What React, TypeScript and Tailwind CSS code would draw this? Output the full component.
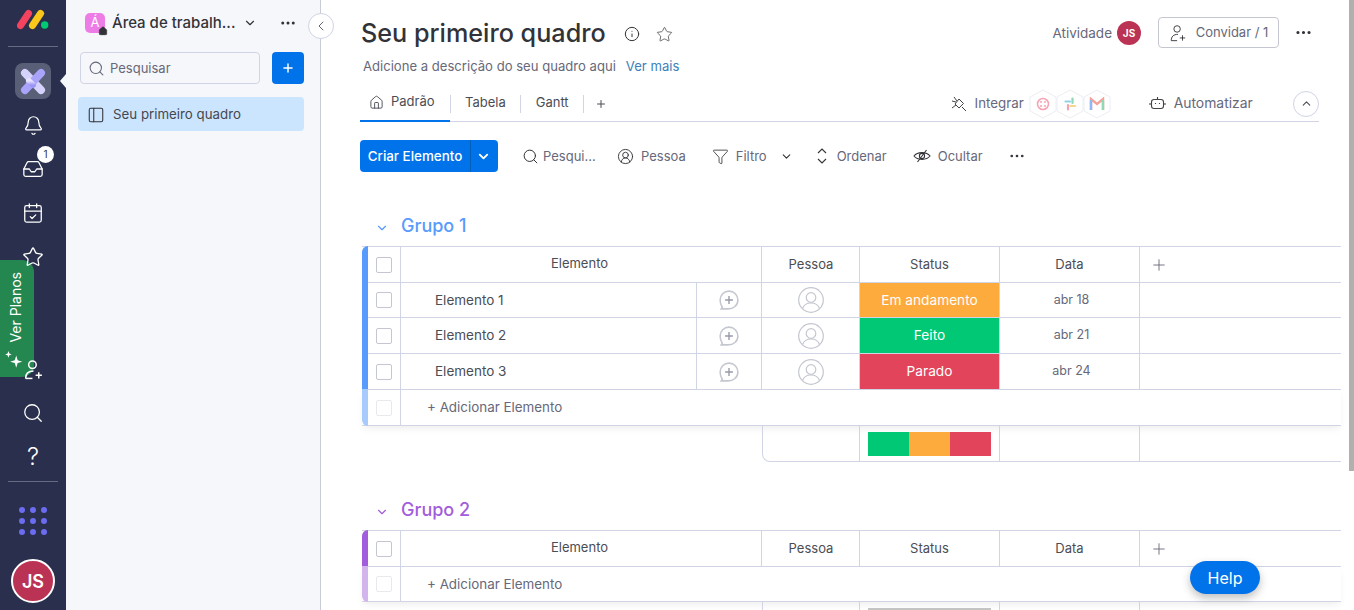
import {
  Bell,
  ChevronDown,
  ChevronLeft,
  ChevronUp,
  CircleUserRound,
  Filter,
  Home,
  Inbox,
  Info,
  MoreHorizontal,
  PanelLeft,
  Plus,
  Search,
  Star,
  CalendarCheck,
} from "lucide-react";

const Divider = () => <span className="mx-[14.5px] h-[18px] w-px bg-[#d0d4e4]" />;

const MondayLogo = () => (
  <svg width="32" height="21" viewBox="0 0 32 21">
    <line x1="3.5" y1="16.5" x2="11.5" y2="4.5" stroke="#f5435f" strokeWidth="7" strokeLinecap="round" />
    <line x1="15.5" y1="16.5" x2="23.5" y2="4.5" stroke="#fbc71a" strokeWidth="7" strokeLinecap="round" />
    <circle cx="27.7" cy="16" r="3.7" fill="#00ca72" />
  </svg>
);

const WorkspaceIcon = () => (
  <svg width="30" height="30" viewBox="0 0 30 30">
    <defs>
      <linearGradient id="wsGrad" x1="0" y1="0" x2="0" y2="1">
        <stop offset="0" stopColor="#e6e3ff" />
        <stop offset="1" stopColor="#9a95f7" />
      </linearGradient>
    </defs>
    <path d="M7 7 L23 24" stroke="#d5d2fc" strokeWidth="8" strokeLinecap="round" />
    <path d="M23 7 L7 24" stroke="#a9a4fa" strokeWidth="8" strokeLinecap="round" />
    <path d="M11 15 L15 19" stroke="url(#wsGrad)" strokeWidth="6" strokeLinecap="round" />
  </svg>
);

const Sparkles = () => (
  <svg width="20" height="20" viewBox="0 0 18 18" fill="white">
    <path d="M11 5 L12.3 9.2 L16.5 10.5 L12.3 11.8 L11 16 L9.7 11.8 L5.5 10.5 L9.7 9.2 Z" />
    <path d="M4 1 L4.8 3.2 L7 4 L4.8 4.8 L4 7 L3.2 4.8 L1 4 L3.2 3.2 Z" />
  </svg>
);

const InviteIcon = ({ size, width }: { size: number; width: number }) => (
  <svg width={size} height={size} viewBox="0 0 20 20" fill="none" stroke="currentColor" strokeWidth={width}>
    <circle cx="9" cy="5.5" r="3.6" />
    <path d="M2.5 18.5 C2.5 14 5 11.5 10 11.5" />
    <path d="M2.5 18.5 H9" />
    <path d="M15 12.5 V18.5 M12 15.5 H18" />
  </svg>
);

const HiddenEye = () => (
  <svg width="18" height="16" viewBox="0 0 18 16" fill="none" stroke="#323338" strokeWidth="1.1">
    <path d="M1 8 C4.5 3.5 13.5 3.5 17 8 C13.5 12.5 4.5 12.5 1 8 Z" />
    <circle cx="9" cy="8" r="2.6" />
    <path d="M13.5 2 L4.5 14" />
  </svg>
);

const PlugIcon = () => (
  <svg width="16" height="16" viewBox="0 0 16 16" fill="none" stroke="#444" strokeWidth="1">
    <path d="M4 8 L8 3 L12.5 7.5 L8 12 Z" />
    <path d="M1 5 L5 6 M3 1 L6 5 M11 11 L15 15 M1 12 L5 9" />
  </svg>
);

const BotIcon = () => (
  <svg width="17" height="16" viewBox="0 0 17 16" fill="none" stroke="#444" strokeWidth="1.1">
    <rect x="2.5" y="3.5" width="12" height="9" rx="2.5" />
    <path d="M8.5 1 V3.5 M1 7 V9 M16 7 V9 M6.5 7 V8 M10.5 7 V8" />
  </svg>
);

const CommentPlus = () => (
  <svg width="20" height="20" viewBox="1 1 18 18" fill="none" stroke="#c5c7d0" strokeWidth="1.4">
    <path d="M4 16.5 L3 18 L9 18 C14 18 18 15 18 10 C18 5.5 14.5 2 10 2 C5.5 2 2 5.5 2 10 C2 12.5 3 15 4 16.5 Z" />
    <path d="M10 6.5 V13.5 M6.5 10 H13.5" stroke="#9699a6" strokeWidth="1.2" />
  </svg>
);

const PersonCircle = () => (
  <svg width="26" height="26" viewBox="0 0 26 26" fill="none" stroke="#c5c7d0" strokeWidth="1.2">
    <circle cx="13" cy="13" r="12.3" />
    <circle cx="13" cy="10.5" r="4.8" />
    <path d="M4.5 21.5 C6 17.5 9 16 13 16 C17 16 20 17.5 21.5 21.5" />
  </svg>
);

const Hex = ({ children }: { children: React.ReactNode }) => (
  <svg width="28" height="30" viewBox="0 0 28 30" className="-mr-[1px]">
    <path d="M14 1 L27 8 V22 L14 29 L1 22 V8 Z" fill="white" stroke="#eceef5" strokeWidth="1" />
    {children}
  </svg>
);

const Check = ({ faded }: { faded?: boolean }) => (
  <span className={`h-4 w-4 rounded-[2px] border ${faded ? "border-[#e8e9ef]" : "border-[#c5c7d0]"}`} />
);

const cols = "flex w-[979px] border-b border-[#d0d4e4]";

const AccentCheck = ({ color, faded }: { color: string; faded?: boolean }) => (
  <div className="flex w-[39px] shrink-0 border-r border-[#d0d4e4]">
    <span className={`-my-px w-[6px] ${color}`} />
    <div className="flex flex-1 items-center justify-center pr-[1px]">
      <Check faded={faded} />
    </div>
  </div>
);

const HeaderRow = ({ color }: { color: string }) => (
  <div className={`${cols} h-[37px] border-t`}>
    <AccentCheck color={`${color} rounded-tl-md`} />
    <div className="flex w-[361px] items-center justify-center border-r border-[#d0d4e4] pb-[2px] pr-[3px]">Elemento</div>
    <div className="flex w-[98px] items-center justify-center border-r border-[#d0d4e4] pl-[1px]">Pessoa</div>
    <div className="flex w-[140px] items-center justify-center border-r border-[#d0d4e4]">Status</div>
    <div className="flex w-[140px] items-center justify-center border-r border-[#d0d4e4]">Data</div>
    <div className="flex flex-1 items-center pl-[10px]">
      <Plus size={18} strokeWidth={1.2} className="text-[#676879]" />
    </div>
  </div>
);

const ItemRow = ({ name, status, statusBg, date, height }: { name: string; status: string; statusBg: string; date: string; height: string }) => (
  <div className={`${cols} ${height}`}>
    <AccentCheck color="bg-[#579bfc]" />
    <div className="flex w-[296px] items-center border-r border-[#d0d4e4] pl-[34px] text-[13.5px]">{name}</div>
    <div className="flex w-[65px] items-center justify-center border-r border-[#d0d4e4]">
      <CommentPlus />
    </div>
    <div className="flex w-[98px] items-center justify-center border-r border-[#d0d4e4]">
      <PersonCircle />
    </div>
    <div className={`flex w-[140px] items-center justify-center border-r border-[#d0d4e4] text-[13.7px] text-white ${statusBg}`}>{status}</div>
    <div className="flex w-[140px] items-center justify-center border-r border-[#d0d4e4] pl-[4px] text-[12.5px] text-[#676879]">{date}</div>
    <div className="flex-1" />
  </div>
);

const AddRow = ({ color, height }: { color: string; height: string }) => (
  <div className={`${cols} ${height} shadow-[0_4px_8px_-2px_rgba(0,0,0,0.08)]`}>
    <AccentCheck color={`${color} rounded-bl-md`} faded />
    <div className="flex flex-1 items-center pl-[26px] text-[13.4px] text-[#676879]">+ Adicionar Elemento</div>
  </div>
);

const FooterRow = ({ children }: { children?: React.ReactNode }) => (
  <div className="flex h-9 w-[979px] pl-[399px]">
    <div className="ml-[1px] w-[98px] rounded-bl-lg border-b border-l border-r border-[#d0d4e4]" />
    <div className="flex w-[140px] items-center justify-center border-b border-r border-[#d0d4e4]">{children}</div>
    <div className="w-[140px] border-b border-r border-[#d0d4e4]" />
    <div className="flex-1 border-b border-[#d0d4e4]" />
  </div>
);

export default function App() {
  return (
    <div className="relative flex h-screen w-full overflow-hidden bg-white font-['Inter',sans-serif] text-[13px] text-[#4b4d55]">
      {/* barra lateral escura */}
      <aside className="relative flex w-[66px] shrink-0 flex-col items-center bg-[#292f4c] text-white">
        <div className="flex h-[46px] items-center justify-center pb-[7px]">
          <MondayLogo />
        </div>
        <div className="h-px w-[50px] bg-[#676b82]" />
        <div className="mt-4 flex h-9 w-9 items-center justify-center rounded-lg bg-[#5a5f78]">
          <WorkspaceIcon />
        </div>
        <div className="relative z-10 mt-1 flex h-11 items-center justify-center">
          <Bell size={21} strokeWidth={1.4} />
        </div>
        <div className="relative z-10 flex h-11 items-center justify-center">
          <Inbox size={22} strokeWidth={1.4} />
          <span className="absolute -right-[10px] top-[-1px] flex h-[17px] w-[17px] items-center justify-center rounded-full bg-white text-[10px] text-[#323338]">1</span>
        </div>
        <div className="relative z-10 flex h-11 items-center justify-center">
          <CalendarCheck size={22} strokeWidth={1.4} />
        </div>
        <div className="relative z-10 flex h-11 items-center justify-center">
          <Star size={22} strokeWidth={1.4} />
        </div>

        <div className="relative z-10 mt-auto flex h-11 items-center justify-center">
          <InviteIcon size={21} width={1.4} />
        </div>
        <div className="flex h-11 items-center justify-center">
          <Search size={22} strokeWidth={1.4} />
        </div>
        <div className="flex h-11 items-center justify-center">
          <span className="text-[24px] font-light leading-none">?</span>
        </div>
        <div className="mt-[2px] h-px w-[50px] bg-[#676b82]" />
        <div className="mt-[25px] grid grid-cols-3 gap-[5px]">
          {Array.from({ length: 9 }).map((_, i) => (
            <span key={i} className="h-[6px] w-[6px] rounded-full bg-[#6c6cf0]" />
          ))}
        </div>
        <div className="mb-[7px] mt-[24px] flex h-11 w-11 items-center justify-center rounded-full border-2 border-white bg-[#bb3354] text-[18px] font-semibold">JS</div>

        <div className="absolute left-0 top-[260px] flex h-[117px] w-[34px] flex-col items-center rounded-r-xl bg-[#258750] pr-[3px] pt-[12px]">
          <span className="rotate-180 text-[14px] [writing-mode:vertical-rl]">Ver Planos</span>
          <span className="mr-[3px] mt-[7px]">
            <Sparkles />
          </span>
        </div>
        <span className="absolute right-0 top-[74px] h-0 w-0 border-y-[7px] border-r-[6px] border-y-transparent border-r-[#f6f7fb]" />
      </aside>

      {/* painel da área de trabalho */}
      <aside className="w-[255px] shrink-0 border-r border-[#c9ccd8] bg-[#f6f7fb] pl-[12px] pr-[16px]">
        <div className="flex h-[46px] items-center pl-[7px]">
          <span className="relative flex h-5 w-5 shrink-0 items-center justify-center rounded-[5px] bg-[#ee7ce6] text-[13px] text-white">
            Á
            <Home size={10} fill="#323338" strokeWidth={1} className="absolute -bottom-[3px] -right-[3px] text-[#323338]" />
          </span>
          <span className="ml-[7px] w-[122px] whitespace-nowrap text-[15px] font-medium text-[#323338]">Área de trabalh...</span>
          <ChevronDown size={14} className="ml-[9px] text-[#323338]" />
          <MoreHorizontal size={18} className="ml-[22px] text-[#323338]" />
        </div>
        <div className="mt-[6px] flex gap-3 pl-[2px]">
          <div className="flex h-8 flex-1 items-center gap-[5px] rounded-[4px] border border-[#d0d4e4] pl-[7px] pt-[1px] text-[#676879]">
            <Search size={17} strokeWidth={1.5} />
            Pesquisar
          </div>
          <div className="flex h-8 w-8 items-center justify-center rounded-[4px] bg-[#0073ea] text-white">
            <Plus size={14} strokeWidth={2.5} />
          </div>
        </div>
        <div className="mt-[13px] flex h-[34px] items-center gap-2 rounded-[4px] bg-[#cce5ff] pl-[9px] pt-[1px] text-[13.3px] text-[#45474f]">
          <PanelLeft size={18} strokeWidth={1.4} className="text-[#323338]" />
          Seu primeiro quadro
        </div>
      </aside>

      <div className="absolute left-[308px] top-[13px] z-20 flex h-[26px] w-[26px] items-center justify-center rounded-full border border-[#d0d4e4] bg-white">
        <ChevronLeft size={16} strokeWidth={1.3} />
      </div>

      {/* conteúdo do quadro */}
      <main className="min-w-0 flex-1 pl-[39px]">
        <div className="w-[959px]">
          <div className="flex h-[52px] items-end">
            <h1 className="pl-[1px] text-[25.2px] font-medium leading-[38px] text-[#323338]">Seu primeiro quadro</h1>
            <Info size={16} strokeWidth={1.5} className="mb-[10px] ml-[18px] text-[#323338]" />
            <Star size={17} strokeWidth={1} className="mb-[9px] ml-[16px] text-[#323338]" />
            <span className="mb-[9px] ml-auto text-[13.5px] text-[#676879]">Atividade</span>
            <span className="mb-[7px] ml-[5px] flex h-6 w-6 items-center justify-center rounded-full bg-[#bb3354] text-[10px] font-bold text-white">JS</span>
            <div className="mb-[4px] ml-[17px] flex h-[31px] w-[121px] items-center justify-center gap-[9px] rounded-[4px] border border-[#c5c7d0] text-[#676879]">
              <span className="text-[#323338]">
                <InviteIcon size={18} width={1} />
              </span>
              Convidar / 1
            </div>
            <MoreHorizontal size={19} className="mb-[10px] ml-[15px] mr-[6px] text-[#323338]" />
          </div>
          <p className="mt-[5px] pl-[3px] text-[13.1px] leading-[18px] text-[#676879]">
            Adicione a descrição do seu quadro aqui
            <span className="ml-[10px] text-[#3d80b8]">Ver mais</span>
          </p>

          <div className="mt-[14px] flex h-[33px] items-center border-b border-[#d0d4e4] pb-[3px]">
            <div className="relative -mb-[3px] flex w-[90px] items-center gap-[7px] self-stretch pb-[6px] pl-[9px]">
              <Home size={15} strokeWidth={1.5} />
              Padrão
              <span className="absolute -bottom-px left-0 right-0 h-[2px] bg-[#0073ea]" />
            </div>
            <span className="-ml-[0.5px] mr-[14.5px] h-[18px] w-px bg-[#d0d4e4]" />
            <span className="mb-[2px]">Tabela</span>
            <Divider />
            <span className="mb-[2px]">Gantt</span>
            <Divider />
            <Plus size={12} className="-ml-[4px] mr-[344px]" />
            <PlugIcon />
            <span className="ml-[8px] text-[13.3px] text-[#676879]">Integrar</span>
            <div className="ml-[5px] flex items-center">
              <Hex>
                <circle cx="14" cy="15" r="5.5" fill="none" stroke="#f5a3b5" strokeWidth="1.6" />
                <circle cx="12" cy="13" r="1" fill="#f5a3b5" />
                <circle cx="16" cy="13" r="1" fill="#f5a3b5" />
                <circle cx="12" cy="17" r="1" fill="#f5a3b5" />
                <circle cx="16" cy="17" r="1" fill="#f5a3b5" />
              </Hex>
              <Hex>
                <path d="M9.5 12.5 H14" stroke="#8fd3e8" strokeWidth="2.2" strokeLinecap="round" />
                <path d="M16.5 9.5 V14" stroke="#8fd9b3" strokeWidth="2.2" strokeLinecap="round" />
                <path d="M14.5 17 H19" stroke="#f5d58a" strokeWidth="2.2" strokeLinecap="round" />
                <path d="M12 16 V20.5" stroke="#f0a3b8" strokeWidth="2.2" strokeLinecap="round" />
              </Hex>
              <Hex>
                <path d="M8 21 V10 L14 15 L20 10 V21" fill="none" stroke="#f3a29a" strokeWidth="2.4" />
                <path d="M8 21 V11" stroke="#8eb8f5" strokeWidth="2.4" />
                <path d="M20 21 V11" stroke="#8fd9b3" strokeWidth="2.4" />
              </Hex>
            </div>
            <span className="ml-[39px]">
              <BotIcon />
            </span>
            <span className="ml-2 text-[13.9px] text-[#676879]">Automatizar</span>
            <div className="ml-auto flex h-[26px] w-[26px] items-center justify-center rounded-full border border-[#d0d4e4]">
              <ChevronUp size={13} />
            </div>
          </div>
        </div>

        <div className="mt-[18px] flex h-8 items-center text-[#676879]">
          <div className="flex h-8 w-[138px] items-center rounded-[4px] bg-[#0073ea] text-white">
            <span className="flex h-full w-[111px] items-center justify-center border-r border-[#0060b9] text-[13.4px] font-medium">Criar Elemento</span>
            <ChevronDown size={15} strokeWidth={3} className="ml-[5px]" />
          </div>
          <Search size={17} strokeWidth={1.4} className="ml-[24px] text-[#323338]" />
          <span className="ml-[4px] mt-[2px] w-[50px]">Pesqui...</span>
          <CircleUserRound size={17} strokeWidth={1.3} className="ml-[24px] text-[#323338]" />
          <span className="ml-[7px] mt-[2px]">Pessoa</span>
          <Filter size={17} strokeWidth={1.2} className="ml-[26px] text-[#323338]" />
          <span className="ml-[7px] mt-[2px]">Filtro</span>
          <ChevronDown size={13} className="ml-[13px] text-[#323338]" />
          <svg width="12" height="18" viewBox="0 0 12 18" fill="none" stroke="#323338" strokeWidth="1.1" className="ml-[23px]">
            <path d="M2 6 L6 2 L10 6 M2 12 L6 16 L10 12" />
          </svg>
          <span className="ml-[9px] mt-[2px]">Ordenar</span>
          <span className="ml-[26px]">
            <HiddenEye />
          </span>
          <span className="ml-[7px] mt-[2px]">Ocultar</span>
          <MoreHorizontal size={18} strokeWidth={1.6} className="ml-[25px] text-[#323338]" />
        </div>

        {/* grupo 1 */}
        <div className="ml-[2px] mt-[41px]">
          <div className="flex h-[33px] items-start gap-[12px] pl-[13px] text-[18px] font-medium text-[#579bfc]">
            <ChevronDown size={14} className="mt-[8px]" />
            <span className="leading-[26px]">Grupo 1</span>
          </div>
          <HeaderRow color="bg-[#579bfc]" />
          <ItemRow height="h-[35px]" name="Elemento 1" status="Em andamento" statusBg="bg-[#fdab3d]" date="abr 18" />
          <ItemRow height="h-9" name="Elemento 2" status="Feito" statusBg="bg-[#00c875]" date="abr 21" />
          <ItemRow height="h-9" name="Elemento 3" status="Parado" statusBg="bg-[#e2445c]" date="abr 24" />
          <AddRow height="h-9" color="bg-[#a8cbfd]" />
          <FooterRow>
            <div className="flex h-6 w-[123px]">
              <span className="flex-1 bg-[#00c875]" />
              <span className="flex-1 bg-[#fdab3d]" />
              <span className="flex-1 bg-[#e2445c]" />
            </div>
          </FooterRow>
        </div>

        {/* grupo 2 */}
        <div className="ml-[2px] mt-[35px]">
          <div className="flex h-[33px] items-start gap-[12px] pl-[13px] text-[18px] font-medium text-[#a25ddc]">
            <ChevronDown size={14} className="mt-[8px]" />
            <span className="leading-[26px]">Grupo 2</span>
          </div>
          <HeaderRow color="bg-[#a25ddc]" />
          <AddRow height="h-[35px]" color="bg-[#d3b5ee]" />
          <FooterRow>
            <div className="h-6 w-[123px] bg-[#c4c4c4]" />
          </FooterRow>
        </div>
      </main>

      {/* barra de rolagem */}
      <div className="absolute right-0 top-0 h-[471px] w-[5px] bg-[#b0b0b0]" />

      <div className="absolute left-[1190px] top-[561px] flex h-[33px] w-[70px] items-center justify-center rounded-full bg-[#0073ea] text-[16px] text-white shadow-[0_4px_8px_rgba(0,0,0,0.25)]">
        Help
      </div>
    </div>
  );
}
